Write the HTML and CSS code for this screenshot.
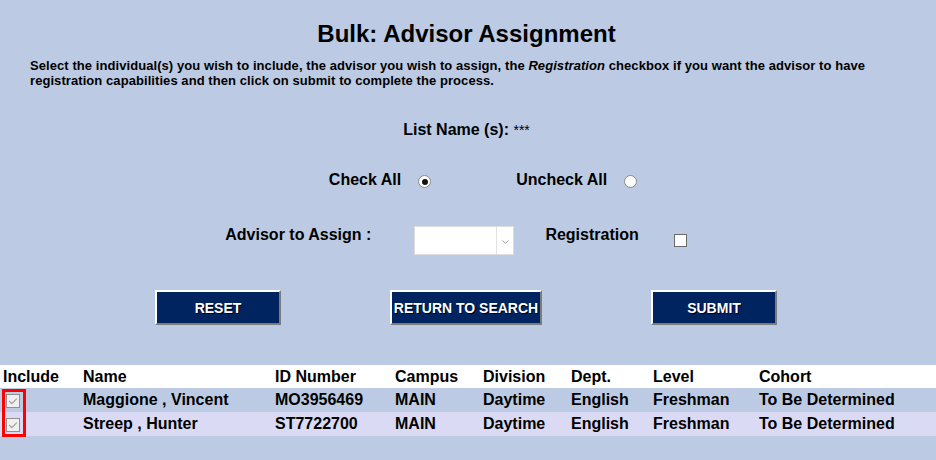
FILE: index.html
```html
<!DOCTYPE html>
<html>
<head>
<meta charset="utf-8">
<title>Bulk: Advisor Assignment</title>
<link rel="stylesheet" href="styles.css">
</head>
<body>
<div class="page">
  <h1 class="title">Bulk: Advisor Assignment</h1>
  <p class="intro">Select the individual(s) you wish to include, the advisor you wish to assign, the <i>Registration</i> checkbox if you want the advisor to have registration capabilities and then click on submit to complete the process.</p>
  <div class="listname">List Name (s): <span class="stars">***</span></div>

  <div class="checkrow">
    <span class="lbl">Check All</span>
    <span class="radio radio-on"></span>
    <span class="lbl lbl-uncheck">Uncheck All</span>
    <span class="radio radio-second"></span>
  </div>

  <div class="advrow">
    <span class="lbl">Advisor to Assign :</span>
    <div class="select">
      <span class="sel-val"></span>
      <span class="sel-arrow"><svg width="7" height="4" viewBox="0 0 7 4"><path d="M0.5 0.5 L3.5 3.2 L6.5 0.5" fill="none" stroke="#9a9a9a" stroke-width="1"/></svg></span>
    </div>
    <span class="lbl lbl-reg">Registration</span>
    <span class="regbox"></span>
  </div>

  <div class="buttons">
    <div class="btn-cell"><button class="btn">RESET</button></div>
    <div class="btn-cell"><button class="btn btn-wide">RETURN TO SEARCH</button></div>
    <div class="btn-cell"><button class="btn">SUBMIT</button></div>
  </div>

  <div class="tablewrap">
    <table class="grid">
      <colgroup>
        <col class="c-inc"><col class="c-name"><col class="c-id"><col class="c-camp"><col class="c-div"><col class="c-dept"><col class="c-lvl"><col class="c-coh">
      </colgroup>
      <thead>
        <tr><th>Include</th><th>Name</th><th>ID Number</th><th>Campus</th><th>Division</th><th>Dept.</th><th>Level</th><th>Cohort</th></tr>
      </thead>
      <tbody>
        <tr class="row-a">
          <td><span class="chk"><svg width="14" height="14" viewBox="0 0 14 14"><rect x="0.5" y="0.5" width="13" height="13" fill="#f0f0f0" stroke="#8f8f8f"/><path d="M3.2 7 L5.8 9.6 L10.8 4.6" fill="none" stroke="#a0a0a0" stroke-width="1.2"/></svg></span></td>
          <td>Maggione , Vincent</td><td>MO3956469</td><td>MAIN</td><td>Daytime</td><td>English</td><td>Freshman</td><td>To Be Determined</td>
        </tr>
        <tr class="row-b">
          <td><span class="chk"><svg width="14" height="14" viewBox="0 0 14 14"><rect x="0.5" y="0.5" width="13" height="13" fill="#f0f0f0" stroke="#8f8f8f"/><path d="M3.2 7 L5.8 9.6 L10.8 4.6" fill="none" stroke="#a0a0a0" stroke-width="1.2"/></svg></span></td>
          <td>Streep , Hunter</td><td>ST7722700</td><td>MAIN</td><td>Daytime</td><td>English</td><td>Freshman</td><td>To Be Determined</td>
        </tr>
      </tbody>
    </table>
    <div class="highlight"></div>
  </div>
</div>
</body>
</html>
```

FILE: styles.css
```css
html, body {
  margin: 0;
  padding: 0;
  background: #bccbe3;
}
body {
  font-family: "Liberation Sans", Arial, sans-serif;
  font-weight: bold;
  color: #000;
  width: 936px;
  height: 460px;
  overflow: hidden;
}
.page {
  padding-top: 20px;
}
.title {
  margin: 0;
  font-size: 24px;
  line-height: 28px;
  text-align: center;
  padding-right: 3px;
}
.intro {
  margin: 10px 0 0 0;
  padding: 0 30px;
  font-size: 13px;
  line-height: 15px;
  letter-spacing: 0.07px;
}
.listname {
  margin-top: 33px;
  font-size: 16px;
  line-height: 18px;
  text-align: center;
  padding-right: 3px;
}
.stars {
  font-weight: normal;
  font-size: 14px;
}
.lbl {
  font-size: 16px;
  line-height: 18px;
  white-space: nowrap;
}
.checkrow {
  margin-top: 32px;
  display: flex;
  justify-content: center;
  align-items: flex-start;
  padding-left: 30px;
  height: 18px;
}
.radio {
  width: 13px;
  height: 13px;
  box-sizing: border-box;
  border: 1px solid #8a8a8a;
  border-radius: 50%;
  background: #fff;
  margin-left: 17px;
  margin-top: 4px;
  position: relative;
}
.radio-on::after {
  content: "";
  position: absolute;
  left: 2.5px;
  top: 2.5px;
  width: 6px;
  height: 6px;
  border-radius: 50%;
  background: #111;
}
.lbl-uncheck {
  margin-left: 85px;
}
.radio-second {
  margin-left: 17px;
}
.advrow {
  margin-top: 37px;
  display: flex;
  justify-content: center;
  align-items: flex-start;
  padding-right: 24px;
  height: 29px;
}
.select {
  margin-left: 43px;
  width: 100px;
  height: 29px;
  box-sizing: border-box;
  border: 1px solid #dedede;
  background: #fff;
  display: flex;
}
.sel-val {
  flex: 1;
  border-right: 1px solid #e2e2e2;
}
.sel-arrow {
  width: 16px;
  display: flex;
  align-items: center;
  justify-content: center;
  padding-top: 2px;
}
.sel-arrow svg {
  display: block;
}
.lbl-reg {
  margin-left: 31px;
}
.regbox {
  margin-left: 35px;
  margin-top: 8px;
  width: 13px;
  height: 13px;
  box-sizing: border-box;
  border: 1px solid #6a6a6a;
  background: #fff;
}
.buttons {
  margin-top: 35px;
  display: grid;
  grid-template-columns: repeat(3, 248px);
  justify-content: center;
  padding-right: 4px;
}
.btn-cell {
  display: flex;
  justify-content: center;
}
.btn {
  width: 126px;
  height: 35px;
  box-sizing: border-box;
  background: #00245f;
  color: #fff;
  font-family: "Liberation Sans", Arial, sans-serif;
  font-weight: bold;
  font-size: 14px;
  padding: 0;
  border-style: solid;
  border-width: 2px;
  border-color: #ffffff #7c7c7c #7c7c7c #ffffff;
  text-shadow: 1px 1px 0 #000;
  white-space: nowrap;
}
.btn-wide {
  width: 152px;
}
.tablewrap {
  margin-top: 40px;
  position: relative;
}
.grid {
  width: 936px;
  border-collapse: collapse;
  table-layout: fixed;
  font-size: 16px;
}
.c-inc { width: 80px; }
.c-name { width: 192px; }
.c-id { width: 120px; }
.c-camp { width: 88px; }
.c-div { width: 88px; }
.c-dept { width: 82px; }
.c-lvl { width: 106px; }
.c-coh { width: 180px; }
.grid th, .grid td {
  padding: 0 0 0 3px;
  text-align: left;
  white-space: nowrap;
  font-weight: bold;
}
.grid thead tr {
  background: #fff;
  height: 23px;
}
.grid th {
  line-height: 23px;
}
.grid td {
  line-height: 24px;
  height: 24px;
}
.row-a {
  background: #bccbe3;
}
.row-b {
  background: #dadaf4;
}
.chk {
  display: inline-block;
  margin-left: 3px;
  vertical-align: middle;
  height: 14px;
}
.chk svg {
  display: block;
}
.highlight {
  position: absolute;
  left: 2px;
  top: 24px;
  width: 24px;
  height: 48px;
  box-sizing: border-box;
  border: 3px solid #f00;
}
```
